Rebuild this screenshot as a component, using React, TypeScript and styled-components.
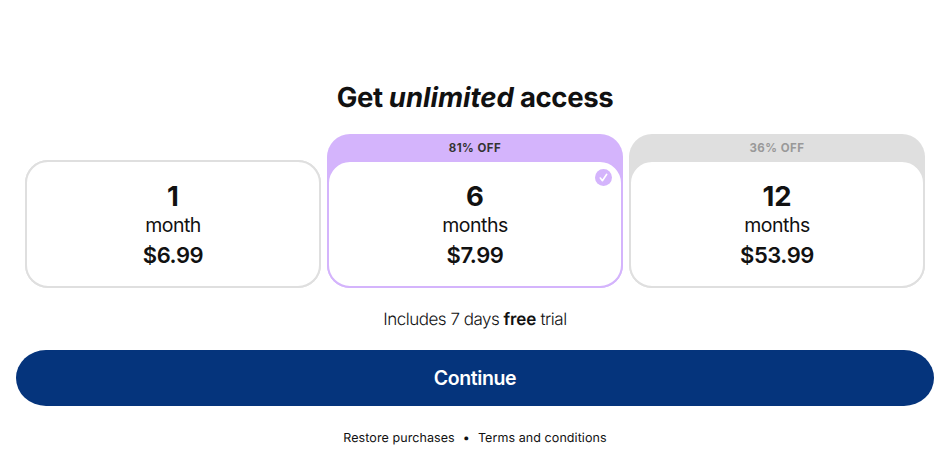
import React from "react";
import styled, { createGlobalStyle } from "styled-components";

const GlobalStyle = createGlobalStyle`
  * { box-sizing: border-box; }
  body { margin: 0; background: #fff; color: #111; font-family: Inter, "Liberation Sans", sans-serif; text-rendering: geometricPrecision; -webkit-font-smoothing: antialiased; }
`;

const Page = styled.main`
  width: 950px;
  height: 460px;
  padding: 79px 16px 0;
  overflow: hidden;
`;

const Title = styled.h1`
  margin: 0;
  height: 36px;
  line-height: 37px;
  font-size: 27.5px;
  font-weight: 700;
  letter-spacing: -0.37px;
  text-align: center;
  white-space: nowrap;
  em { letter-spacing: -0.02px; }
`;

const Plans = styled.div`
  margin-top: 19px;
  padding: 0 9px;
  height: 154px;
  display: grid;
  grid-template-columns: repeat(3, 296px);
  column-gap: 6px;
  align-items: end;
`;

const Plan = styled.button<{ $tone: string }>`
  display: block;
  padding: 0;
  border: 0;
  border-radius: 23px;
  background: ${(p) => p.$tone};
  color: inherit;
  font: inherit;
  text-align: center;
`;

const Discount = styled.div<{ $color: string }>`
  height: 26px;
  line-height: 28px;
  font-size: 11.5px;
  font-weight: 700;
  letter-spacing: 0.5px;
  color: ${(p) => p.$color};
`;

const PlanBody = styled.div<{ $tone: string }>`
  position: relative;
  height: 128px;
  padding-top: 17px;
  border: 2px solid ${(p) => p.$tone};
  border-radius: 23px;
  background: #fff;
`;

const Count = styled.div`
  height: 34px;
  line-height: 35px;
  font-size: 27.5px;
  font-weight: 700;
`;

const Unit = styled.div`
  height: 25px;
  line-height: 25px;
  font-size: 19.5px;
  letter-spacing: -0.5px;
`;

const Price = styled.div`
  margin-top: 2px;
  height: 30px;
  line-height: 30px;
  font-size: 22px;
  font-weight: 600;
  letter-spacing: -0.45px;
`;

const Check = styled.svg`
  position: absolute;
  top: 7px;
  right: 9px;
`;

const Trial = styled.p`
  margin: 20px 0 0;
  height: 24px;
  line-height: 24px;
  font-size: 17px;
  font-weight: 300;
  letter-spacing: -0.5px;
  text-align: center;
  b { font-weight: 600; letter-spacing: -0.1px; }
`;

const Continue = styled.button`
  display: block;
  margin-top: 18px;
  padding: 0;
  width: 100%;
  height: 56px;
  border: 0;
  border-radius: 30px / 28px;
  background: #05347c;
  color: #fff;
  font: 600 19.5px/55px Inter, "Liberation Sans", sans-serif;
  letter-spacing: -0.4px;
`;

const Footer = styled.footer`
  margin-top: 23px;
  display: flex;
  justify-content: center;
  gap: 8px;
  font-size: 12.5px;
  letter-spacing: 0.08px;
  line-height: 20px;
`;

const plans = [
  { count: "1", unit: "month", price: "$6.99", tone: "#dfdfdf" },
  { count: "6", unit: "months", price: "$7.99", tone: "#d4b4fc", off: "81% OFF", offColor: "#333", selected: true },
  { count: "12", unit: "months", price: "$53.99", tone: "#dfdfdf", off: "36% OFF", offColor: "#999" },
];

export default function App() {
  return (
    <>
      <GlobalStyle />
      <Page>
        <Title>Get <em>unlimited</em> access</Title>
        <Plans>
          {plans.map((p) => (
            <Plan key={p.count} $tone={p.tone}>
              {p.off && <Discount $color={p.offColor!}>{p.off}</Discount>}
              <PlanBody $tone={p.tone}>
                <Count>{p.count}</Count>
                <Unit>{p.unit}</Unit>
                <Price>{p.price}</Price>
                {p.selected && (
                  <Check width="17" height="17" viewBox="0 0 17 17" fill="none">
                    <circle cx="8.5" cy="8.5" r="8.5" fill="#d4b4fc" />
                    <path d="M5.3 9L7.4 11.7L11.7 5.3" stroke="#fff" strokeWidth="1.6" strokeLinecap="round" strokeLinejoin="round" />
                  </Check>
                )}
              </PlanBody>
            </Plan>
          ))}
        </Plans>
        <Trial>Includes 7 days <b>free</b> trial</Trial>
        <Continue>Continue</Continue>
        <Footer><span>Restore purchases</span><span>•</span><span>Terms and conditions</span></Footer>
      </Page>
    </>
  );
}
